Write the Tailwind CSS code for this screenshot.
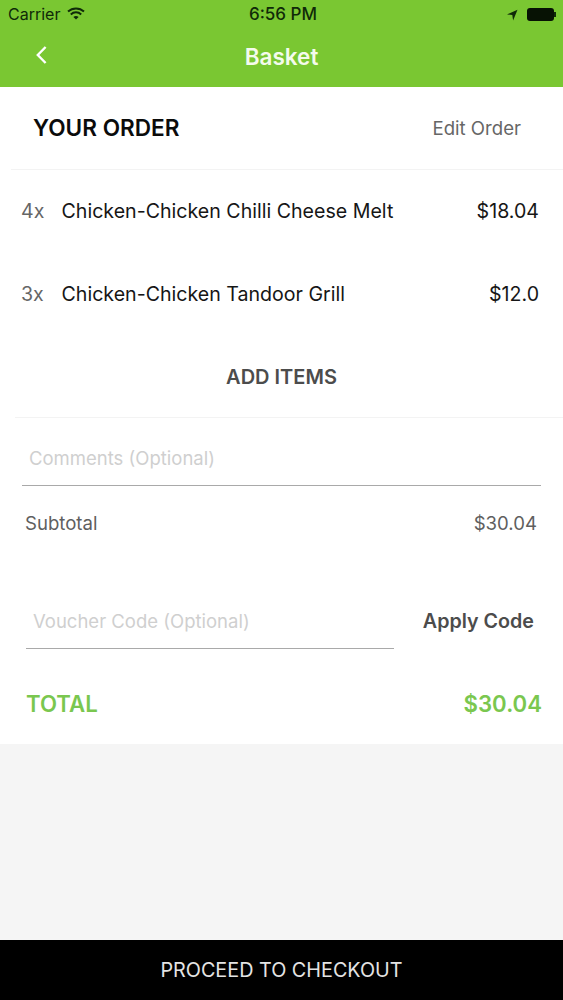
<!DOCTYPE html>
<html>
<head>
<meta charset="utf-8">
<script src="https://cdn.jsdelivr.net/npm/@tailwindcss/browser@4"></script>
</head>
<body class="m-0">
<div class="w-[563px] h-[1000px] flex flex-col bg-[#f5f5f5] overflow-hidden font-['Inter','Liberation_Sans',sans-serif]">
  <header class="h-[87px] bg-[#7ac732] flex flex-col shrink-0">
    <div class="relative h-[29px] text-[#0f2a08] text-[16px] leading-[29px]">
      <div class="absolute left-[8px] top-0 flex items-center h-[29px] gap-[7px]">
        <span>Carrier</span>
        <svg class="w-[18px] h-[13px] -mt-[2px]" viewBox="0 0 18 13" fill="none" stroke="#0f2a08" stroke-width="2"><path d="M1 4.6c4.6-4.2 11.4-4.2 16 0"/><path d="M3.8 7.4c3-2.8 7.4-2.8 10.4 0"/><path d="M9 12.6 6.4 9.9c1.5-1.3 3.7-1.3 5.2 0z" fill="#0f2a08" stroke="none"/></svg>
      </div>
      <div class="text-center font-medium text-[17px] pl-[3px]">6:56 PM</div>
      <div class="absolute right-[7px] top-[8px] flex items-center gap-[9px]">
        <svg class="w-[11px] h-[12px]" viewBox="0 0 11 12"><path d="M10.5.8 0 5.4l5.3.6.8 5.6z" fill="#0f2a08"/></svg>
        <div class="flex items-center">
          <div class="w-[27px] h-[13px] rounded-[3px] bg-[#071204]"></div>
          <div class="w-[2px] h-[5px] bg-[#0f2a08]"></div>
        </div>
      </div>
    </div>
    <div class="relative flex-1 flex items-center justify-center pb-[2px]">
      <svg class="absolute left-[35px] top-[16px] w-[13px] h-[20px]" viewBox="0 0 13 20" fill="none" stroke="#fff" stroke-width="2.4"><path d="M10.6 2 2.8 10l7.8 8"/></svg>
      <span class="text-[22.5px] leading-none font-semibold text-[#f4fbec]">Basket</span>
    </div>
  </header>

  <main class="bg-white h-[657px] shrink-0 flex flex-col">
    <div class="h-[83px] ml-[11px] pl-[23px] pr-[42px] flex items-center justify-between border-b border-[#f3f3f3]">
      <span class="text-[22.6px] font-semibold text-[#0b0b0b] -ml-[1px]">YOUR ORDER</span>
      <span class="text-[18.6px] text-[#666] pt-[1px]">Edit Order</span>
    </div>
    <div class="h-[83px] pl-[21px] pr-[24px] flex items-center text-[19.6px]">
      <span class="w-[40.5px] text-[#666]">4x</span>
      <span class="flex-1 text-[#161616]">Chicken-Chicken Chilli Cheese Melt</span>
      <span class="text-[#161616]">$18.04</span>
    </div>
    <div class="h-[83px] pl-[21px] pr-[24px] flex items-center text-[19.6px]">
      <span class="w-[40.5px] text-[#666]">3x</span>
      <span class="flex-1 text-[#161616]">Chicken-Chicken Tandoor Grill</span>
      <span class="text-[#161616]">$12.0</span>
    </div>
    <div class="h-[82px] ml-[15px] pr-[15px] flex items-center justify-center border-b border-[#f3f3f3]">
      <span class="text-[20px] font-semibold text-[#4c4c4c]">ADD ITEMS</span>
    </div>
    <div class="h-[68px] mx-[22px] pl-[7px] flex items-center border-b border-[#a9a9a9] pt-[15px]">
      <span class="text-[18.5px] text-[#cfcfcf]">Comments (Optional)</span>
    </div>
    <div class="h-[76px] pl-[25px] pr-[26px] flex justify-between pt-[25px] text-[18.6px] text-[#5f5f5f] leading-[24px]">
      <span>Subtotal</span>
      <span>$30.04</span>
    </div>
    <div class="flex pl-[26px] pr-[29px] justify-between">
      <div class="w-[368px] h-[87px] pl-[7px] flex items-center pt-[33px] border-b border-[#a9a9a9]">
        <span class="text-[18.5px] text-[#cfcfcf]">Voucher Code (Optional)</span>
      </div>
      <div class="pt-[44px] text-[19.7px] leading-[30px] font-semibold text-[#4c4c4c]">Apply Code</div>
    </div>
    <div class="pl-[26px] pr-[21px] pt-[38px] flex justify-between items-center text-[22.2px] leading-[34px] font-semibold text-[#7ac74f]">
      <span>TOTAL</span>
      <span>$30.04</span>
    </div>
  </main>

  <div class="flex-1"></div>
  <footer class="h-[60px] shrink-0 bg-black flex items-center justify-center pt-[2px] text-[19.8px] text-[#e4e4e4]">PROCEED TO CHECKOUT</footer>
</div>
</body>
</html>
